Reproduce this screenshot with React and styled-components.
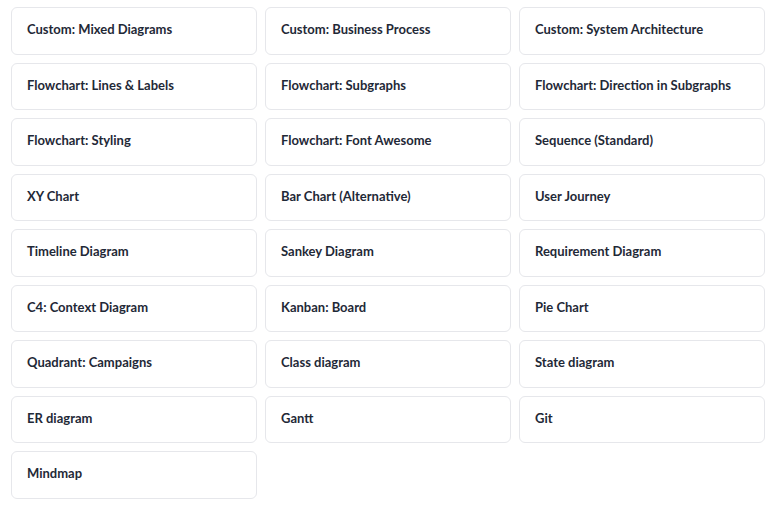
import styled, { createGlobalStyle } from "styled-components";

const GlobalStyle = createGlobalStyle`
  html, body {
    margin: 0;
    padding: 0;
    background: #ffffff;
  }
  body {
    font-family: Lato, "Open Sans", sans-serif;
  }
`;

const Grid = styled.div`
  display: grid;
  grid-template-columns: repeat(3, 1fr);
  gap: 8px;
  padding: 7px 12px 0 11px;
`;

const Card = styled.button`
  display: flex;
  align-items: center;
  text-align: left;
  white-space: nowrap;
  height: 47.5px;
  box-sizing: border-box;
  padding: 0 15px 3px;
  background: #ffffff;
  border: 1px solid #e6e7eb;
  border-radius: 6px;
  font-family: Lato, sans-serif;
  font-size: 13px;
  font-weight: 700;
  color: #1f2937;
  cursor: pointer;
`;

const diagrams = [
  "Custom: Mixed Diagrams",
  "Custom: Business Process",
  "Custom: System Architecture",
  "Flowchart: Lines & Labels",
  "Flowchart: Subgraphs",
  "Flowchart: Direction in Subgraphs",
  "Flowchart: Styling",
  "Flowchart: Font Awesome",
  "Sequence (Standard)",
  "XY Chart",
  "Bar Chart (Alternative)",
  "User Journey",
  "Timeline Diagram",
  "Sankey Diagram",
  "Requirement Diagram",
  "C4: Context Diagram",
  "Kanban: Board",
  "Pie Chart",
  "Quadrant: Campaigns",
  "Class diagram",
  "State diagram",
  "ER diagram",
  "Gantt",
  "Git",
  "Mindmap",
];

const App = () => {
  return (
    <>
      <GlobalStyle />
      <Grid>
        {diagrams.map((name) => (
          <Card key={name}>{name}</Card>
        ))}
      </Grid>
    </>
  );
};

export default App;
